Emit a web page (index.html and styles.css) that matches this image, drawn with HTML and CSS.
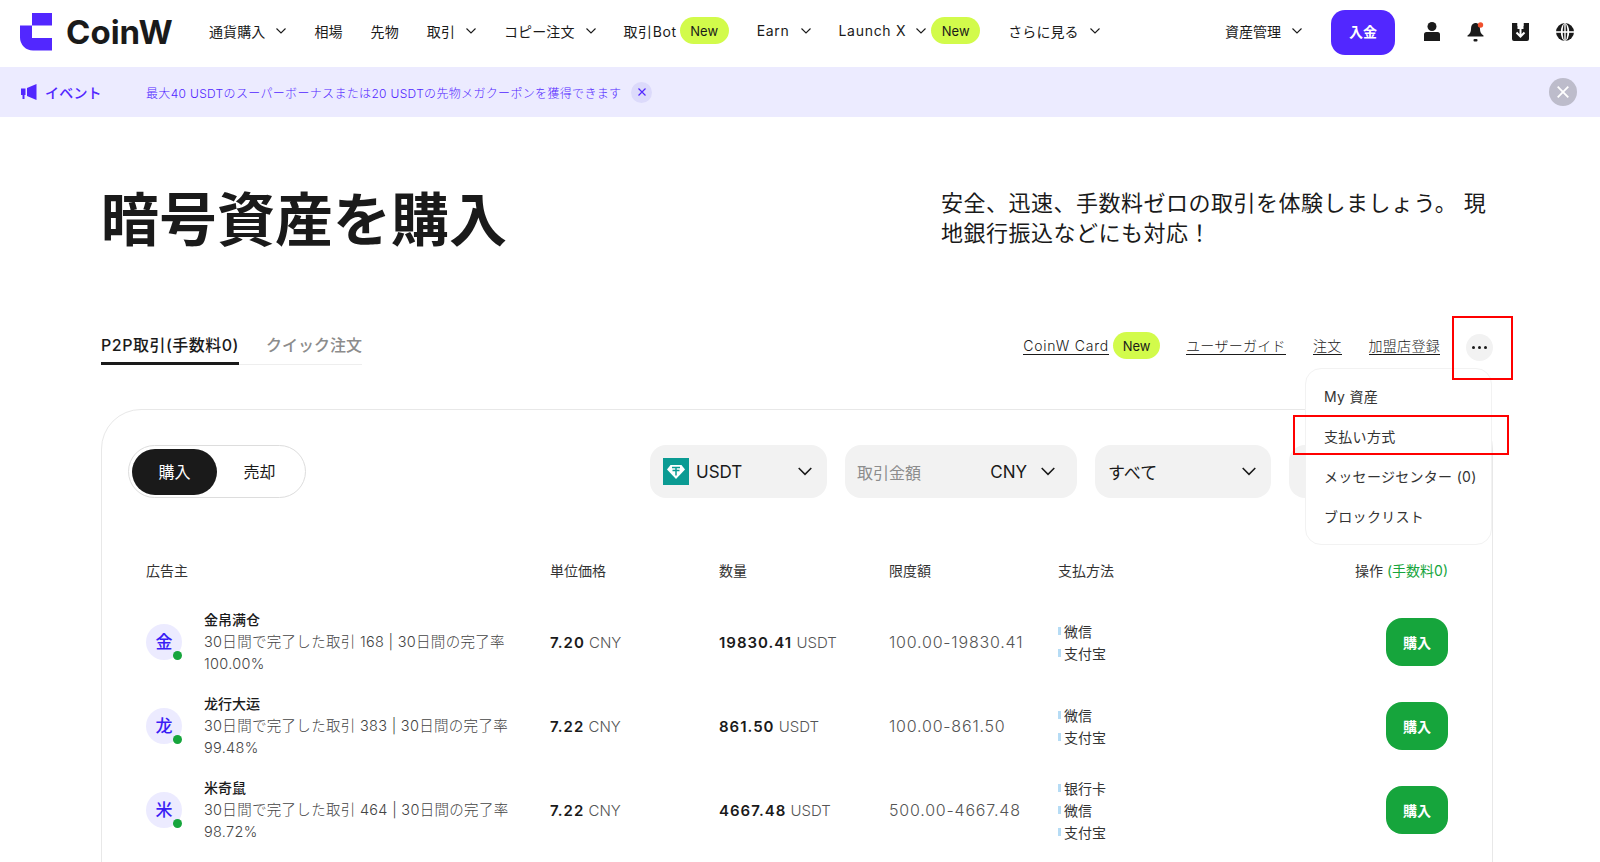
FILE: index.html
```html
<!DOCTYPE html>
<html lang="ja">
<head>
    <meta charset="UTF-8">
    <meta name="viewport" content="width=device-width, initial-scale=1.0">
    <title>CoinW P2P</title>
    <link rel="stylesheet" href="styles.css">
</head>
<body>
    <svg class="defs" width="0" height="0">
        <symbol id="chev" viewBox="0 0 10 6"><path d="M.5.5 5 5 9.5.5" fill="none" stroke="currentColor" stroke-width="1.1"/></symbol>
    </svg>

    <header class="topbar">
        <a class="logo">
            <svg width="32" height="38" viewBox="0 0 32 38"><path d="M12 0H32V12.5H12Z" fill="#5227ff"/><path d="M0 12.5H12V25H32V37.5H13A13 13 0 0 1 0 24.5Z" fill="#5227ff"/></svg>
            <span>CoinW</span>
        </a>
        <nav class="nav">
            <a>通貨購入<svg class="chev"><use href="#chev"/></svg></a>
            <a>相場</a>
            <a>先物</a>
            <a>取引<svg class="chev"><use href="#chev"/></svg></a>
            <a>コピー注文<svg class="chev"><use href="#chev"/></svg></a>
            <a class="tight bot">取引Bot<span class="pill">New</span></a>
            <a class="latin">Earn<svg class="chev"><use href="#chev"/></svg></a>
            <a class="tight latin">Launch X<svg class="chev"><use href="#chev"/></svg><span class="pill">New</span></a>
            <a>さらに見る<svg class="chev"><use href="#chev"/></svg></a>
        </nav>
        <div class="top-right">
            <a class="assets">資産管理<svg class="chev"><use href="#chev"/></svg></a>
            <button class="deposit">入金</button>
            <div class="icons">
                <svg width="16" height="19" viewBox="0 0 16 19"><circle cx="8" cy="4.5" r="4.5" fill="#1a1a1a"/><path d="M0 12.5a2.500 2.500 0 0 1 2.500-2.500h11a2.500 2.500 0 0 1 2.500 2.500V19H0Z" fill="#1a1a1a"/></svg>
                <svg width="18" height="20" viewBox="0 0 18 20"><path d="M8 1c-3 .5-4 3-4 6 0 3-1 5-3.500 6.500v1h16v-1C14 12 13 10 13 7c0-3-1-5.500-4-6Z" fill="#1a1a1a"/><rect x="6.5" y="17" width="4" height="2.5" rx="1" fill="#1a1a1a"/><circle cx="13.5" cy="3" r="2.7" fill="#f0502d"/></svg>
                <svg width="17" height="18" viewBox="0 0 17 18"><path d="M0 0H5.500V6H11.500V0H17V16a2 2 0 0 1-2 2H2a2 2 0 0 1-2-2Z" fill="#1a1a1a"/><path d="M8.500 3v10M4.500 9.500l4 4 4-4" fill="none" stroke="#fff" stroke-width="2"/><path d="M5.500 0h6v3h-6z" fill="#fff"/></svg>
                <svg width="18" height="18" viewBox="0 0 18 18"><circle cx="9" cy="9" r="9" fill="#1a1a1a"/><ellipse cx="9" cy="9" rx="4.2" ry="8.8" fill="#fff"/><ellipse cx="9" cy="9" rx="2.3" ry="9" fill="#1a1a1a"/><path d="M0 9h18" stroke="#fff" stroke-width="1.6"/><path d="M8.300 0h1.400v18H8.300z" fill="#fff"/></svg>
            </div>
        </div>
    </header>

    <div class="notice">
        <svg class="horn" width="17" height="16" viewBox="0 0 17 16"><path d="M7 4 16.500 0V16L7 12Z" fill="#5227ff"/><path d="M1 4.500H5.500V11H4.500V15H2.500V11H1Z" fill="#5227ff"/></svg>
        <strong>イベント</strong>
        <span class="notice-text">最大40 USDTのスーパーボーナスまたは20 USDTの先物メガクーポンを獲得できます</span>
        <span class="notice-x"><svg width="8" height="8" viewBox="0 0 8 8"><path d="M.5.5l7 7M7.500.5l-7 7" stroke="#5227ff" stroke-width="1.2"/></svg></span>
        <span class="notice-close"><svg width="12" height="12" viewBox="0 0 12 12"><path d="M.7.7l10.600 10.600M11.300.7.7 11.300" stroke="#fff" stroke-width="1.8"/></svg></span>
    </div>

    <main class="main">
        <section class="hero">
            <h1>暗号資産を購入</h1>
            <p>安全、迅速、手数料ゼロの取引を体験しましょう。 現地銀行振込などにも対応！</p>
        </section>

        <div class="tabs-row">
            <div class="tabs">
                <a class="tab active">P2P取引(手数料0)</a>
                <a class="tab">クイック注文</a>
            </div>
            <div class="links">
                <a class="link card-link">CoinW Card</a><span class="pill">New</span>
                <a class="link guide">ユーザーガイド</a>
                <a class="link">注文</a>
                <a class="link">加盟店登録</a>
                <div class="more">
                    <span class="dots"><i></i><i></i><i></i></span>
                    <div class="mark mark-dots"></div>
                    <div class="menu">
                        <a>My 資産</a>
                        <a>支払い方式</a>
                        <a>メッセージセンター (0)</a>
                        <a>ブロックリスト</a>
                        <div class="mark mark-pay"></div>
                    </div>
                </div>
            </div>
        </div>

        <section class="card">
            <div class="toolbar">
                <div class="toggle">
                    <span class="on">購入</span>
                    <span>売却</span>
                </div>
                <div class="filters">
                    <div class="select coin">
                        <span class="coin-name">
                            <svg width="26" height="27" viewBox="0 0 26 27"><rect width="26" height="27" fill="#0b9b93"/><path d="M7.500 7h11L22 11.500 13 21 4 11.500Z" fill="#fff"/><path d="M9 9.500h8M13 9.500v8M9.500 12.500h7" stroke="#0b9b93" stroke-width="1.5" fill="none"/></svg>
                            USDT
                        </span>
                        <svg class="chev-lg"><use href="#chev"/></svg>
                    </div>
                    <div class="select amount">
                        <span class="hint">取引金額</span>
                        <span class="cur">CNY<svg class="chev-lg"><use href="#chev"/></svg></span>
                    </div>
                    <div class="select all">
                        <span>すべて</span>
                        <svg class="chev-lg"><use href="#chev"/></svg>
                    </div>
                    <div class="select last"></div>
                </div>
            </div>

            <div class="table">
                <div class="row head">
                    <div>広告主</div>
                    <div>単位価格</div>
                    <div>数量</div>
                    <div>限度額</div>
                    <div>支払方法</div>
                    <div class="right">操作 <em>(手数料0)</em></div>
                </div>

                <div class="row">
                    <div class="seller">
                        <span class="avatar">金</span>
                        <div class="info">
                            <b>金帛满仓</b>
                            <p>30日間で完了した取引 168 | 30日間の完了率 100.00%</p>
                        </div>
                    </div>
                    <div class="num"><b>7.20</b> CNY</div>
                    <div class="num"><b>19830.41</b> USDT</div>
                    <div class="limit">100.00-19830.41</div>
                    <div class="pay"><span>微信</span><span>支付宝</span></div>
                    <div class="right"><button class="buy">購入</button></div>
                </div>

                <div class="row">
                    <div class="seller">
                        <span class="avatar">龙</span>
                        <div class="info">
                            <b>龙行大运</b>
                            <p>30日間で完了した取引 383 | 30日間の完了率 99.48%</p>
                        </div>
                    </div>
                    <div class="num"><b>7.22</b> CNY</div>
                    <div class="num"><b>861.50</b> USDT</div>
                    <div class="limit">100.00-861.50</div>
                    <div class="pay"><span>微信</span><span>支付宝</span></div>
                    <div class="right"><button class="buy">購入</button></div>
                </div>

                <div class="row">
                    <div class="seller">
                        <span class="avatar">米</span>
                        <div class="info">
                            <b>米奇鼠</b>
                            <p>30日間で完了した取引 464 | 30日間の完了率 98.72%</p>
                        </div>
                    </div>
                    <div class="num"><b>7.22</b> CNY</div>
                    <div class="num"><b>4667.48</b> USDT</div>
                    <div class="limit">500.00-4667.48</div>
                    <div class="pay"><span>银行卡</span><span>微信</span><span>支付宝</span></div>
                    <div class="right"><button class="buy">購入</button></div>
                </div>
            </div>
        </section>
    </main>
</body>
</html>
```
FILE: styles.css
```css
* {
    box-sizing: border-box;
}
html, body {
    height: 862px;
    overflow: hidden;
}
body {
    margin: 0;
    background: #fff;
    color: #1a1a1a;
    font-family: Inter, "Noto Sans CJK JP", sans-serif;
    font-size: 14px;
}
.defs {
    position: absolute;
}
p, h1 {
    margin: 0;
}

/* top bar */
.topbar {
    display: flex;
    align-items: center;
    height: 67px;
    padding: 0 26px 6px 20px;
}
.logo {
    display: flex;
    align-items: center;
    gap: 14px;
    width: 189px;
    margin-top: 2px;
    font-size: 33px;
    font-weight: 700;
}
.nav {
    display: flex;
    align-items: center;
    gap: 28px;
    letter-spacing: .1px;
}
.nav a, .assets {
    display: flex;
    align-items: center;
    gap: 11px;
    white-space: nowrap;
}
.nav a.tight {
    gap: 3px;
}
.nav a.bot {
    letter-spacing: .6px;
}
.nav a.latin {
    letter-spacing: .7px;
}
.nav a.tight .chev {
    margin: 0 2px 0 7px;
}
.chev {
    width: 10px;
    height: 6px;
}
.chev-lg {
    width: 14px;
    height: 9px;
}
.pill {
    display: inline-flex;
    align-items: center;
    justify-content: center;
    width: 49px;
    height: 27px;
    border-radius: 14px;
    background: #d2fb4b;
    font-size: 13px;
    letter-spacing: 0;
}
.top-right {
    display: flex;
    align-items: center;
    margin-left: auto;
}
.deposit {
    width: 64px;
    height: 45px;
    margin: 4px 0 0 29px;
    padding-bottom: 4px;
    border: none;
    border-radius: 14px;
    background: #5227ff;
    color: #fff;
    font: 700 14px Inter, "Noto Sans CJK JP", sans-serif;
}
.icons {
    display: flex;
    align-items: center;
    gap: 27px;
    margin: 2px 0 0 29px;
}

/* notice strip */
.notice {
    display: flex;
    align-items: center;
    height: 50px;
    padding: 0 23px 0 20px;
    background: #ecebff;
    color: #5227ff;
}
.notice strong {
    width: 101px;
    margin-left: 8px;
    font-weight: 500;
    letter-spacing: .2px;
}
.notice-text {
    font-size: 12px;
    font-weight: 300;
    letter-spacing: .33px;
}
.notice-x, .notice-close {
    display: flex;
    align-items: center;
    justify-content: center;
    border-radius: 50%;
}
.notice-x {
    width: 21px;
    height: 21px;
    margin-left: 10px;
    background: #dcdafb;
}
.notice-close {
    width: 28px;
    height: 28px;
    margin-left: auto;
    background: #bdbccb;
}

/* hero */
.main {
    padding: 0 107px 0 101px;
}
.hero {
    display: flex;
    justify-content: space-between;
    align-items: center;
    height: 204px;
}
.hero h1 {
    margin-top: 1px;
    font-size: 58px;
    font-weight: 700;
    line-height: 80px;
}
.hero p {
    width: 552px;
    padding-bottom: 2px;
    font-size: 22px;
    line-height: 30px;
    letter-spacing: .5px;
}

/* tabs and links */
.tabs-row {
    display: flex;
    justify-content: space-between;
    align-items: center;
    height: 44px;
}
.tabs {
    display: flex;
    gap: 27px;
    height: 44px;
    padding-top: 11px;
    border-bottom: 1px solid #eee;
    font-size: 16px;
    font-weight: 500;
}
.tab {
    height: 33px;
    color: #8c8c8c;
}
.tab.active {
    color: #1a1a1a;
    border-bottom: 3px solid #1a1a1a;
    letter-spacing: .5px;
}
.links {
    display: flex;
    align-items: center;
    padding-top: 5px;
    font-weight: 300;
    letter-spacing: .3px;
}
.links .pill {
    width: 47px;
    margin-left: 4px;
    font-weight: 400;
}
.link {
    margin-left: 27px;
    border-bottom: 1px solid #1a1a1a;
    line-height: 17px;
    white-space: nowrap;
}
.links .card-link {
    margin-left: 0;
    letter-spacing: .8px;
}
.links .guide {
    margin-left: 26px;
}
.more {
    position: relative;
    margin: 4px 0 0 26px;
}
.dots {
    display: flex;
    align-items: center;
    justify-content: center;
    gap: 3px;
    width: 27px;
    height: 27px;
    border-radius: 50%;
    background: #f2f2f2;
}
.dots i {
    width: 3px;
    height: 3px;
    border-radius: 50%;
    background: #1a1a1a;
}
.menu {
    position: absolute;
    top: 34px;
    left: -161px;
    z-index: 5;
    width: 187px;
    padding: 8px 0 7px 18px;
    background: #fff;
    border: 1px solid #f2f2f2;
    border-radius: 16px;
    white-space: nowrap;
}
.menu a {
    display: block;
    line-height: 40px;
    font-weight: 400;
    color: #333;
}
.mark {
    position: absolute;
    z-index: 6;
    border: 2px solid #f00;
}
.mark-dots {
    top: -18px;
    left: -14px;
    width: 61px;
    height: 64px;
}
.mark-pay {
    top: 46px;
    left: -13px;
    width: 216px;
    height: 40px;
}

/* card */
.card {
    height: 600px;
    margin-top: 44px;
    padding-top: 35px;
    border: 1px solid #e8e8e8;
    border-radius: 40px;
}
.toolbar {
    display: flex;
    justify-content: space-between;
    padding: 0 27px 0 26px;
}
.toggle {
    display: flex;
    align-items: center;
    width: 178px;
    height: 53px;
    padding: 0 3px;
    border: 1px solid #ddd;
    border-radius: 27px;
    font-size: 16px;
}
.toggle span {
    width: 86px;
    height: 46px;
    line-height: 46px;
    text-align: center;
    border-radius: 23px;
}
.toggle .on {
    background: #1a1a1a;
    color: #fff;
}
.filters {
    display: flex;
    gap: 18px;
    font-size: 17px;
}
.select {
    display: flex;
    align-items: center;
    justify-content: space-between;
    width: 177px;
    height: 53px;
    padding: 0 15px 0 13px;
    background: #f2f2f2;
    border-radius: 16px;
}
.coin-name {
    display: flex;
    align-items: center;
    gap: 7px;
}
.amount {
    width: 232px;
    padding: 0 22px 0 12px;
}
.hint {
    font-size: 16px;
    color: #8c8c8c;
}
.cur {
    display: flex;
    align-items: center;
    gap: 14px;
}
.all, .last {
    width: 176px;
}

/* table */
.table {
    margin-top: 52px;
    padding: 0 44px;
}
.row {
    display: grid;
    grid-template-columns: 404px 169px 170px 169px 1fr 120px;
    align-items: center;
    height: 84px;
    font-weight: 300;
    color: #444;
}
.row.head {
    height: 40px;
    margin-bottom: 10px;
    color: #333;
    font-weight: 400;
}
.right {
    display: flex;
    justify-content: flex-end;
    gap: 4px;
    white-space: nowrap;
}
.right em {
    font-style: normal;
    color: #16a53c;
}
.seller {
    display: flex;
    align-items: center;
    gap: 22px;
}
.avatar {
    position: relative;
    flex: none;
    width: 36px;
    height: 36px;
    line-height: 36px;
    text-align: center;
    border-radius: 50%;
    background: #ecebff;
    color: #3a1df5;
    font-size: 17px;
    font-weight: 500;
}
.avatar::after {
    content: "";
    position: absolute;
    right: 0;
    bottom: 0;
    width: 9px;
    height: 9px;
    border-radius: 50%;
    background: #16a53c;
}
.info {
    width: 310px;
    line-height: 22px;
}
.info b {
    display: block;
    font-size: 14px;
    font-weight: 500;
    color: #1a1a1a;
}
.info p {
    font-size: 14.5px;
    letter-spacing: .3px;
}
.num {
    font-size: 15px;
    color: #555;
}
.num b {
    font-weight: 600;
    letter-spacing: 1px;
    color: #1a1a1a;
}
.limit {
    font-size: 16px;
    letter-spacing: .8px;
    color: #555;
}
.pay {
    display: flex;
    flex-direction: column;
}
.pay span {
    display: flex;
    align-items: center;
    gap: 3px;
    height: 22px;
    font-weight: 400;
    color: #333;
}
.pay span::before {
    content: "";
    width: 3px;
    height: 8px;
    background: #b6dcf5;
}
.buy {
    width: 62px;
    height: 48px;
    border: none;
    border-radius: 16px;
    background: #16a53c;
    color: #fff;
    font: 700 14px Inter, "Noto Sans CJK JP", sans-serif;
}
```
